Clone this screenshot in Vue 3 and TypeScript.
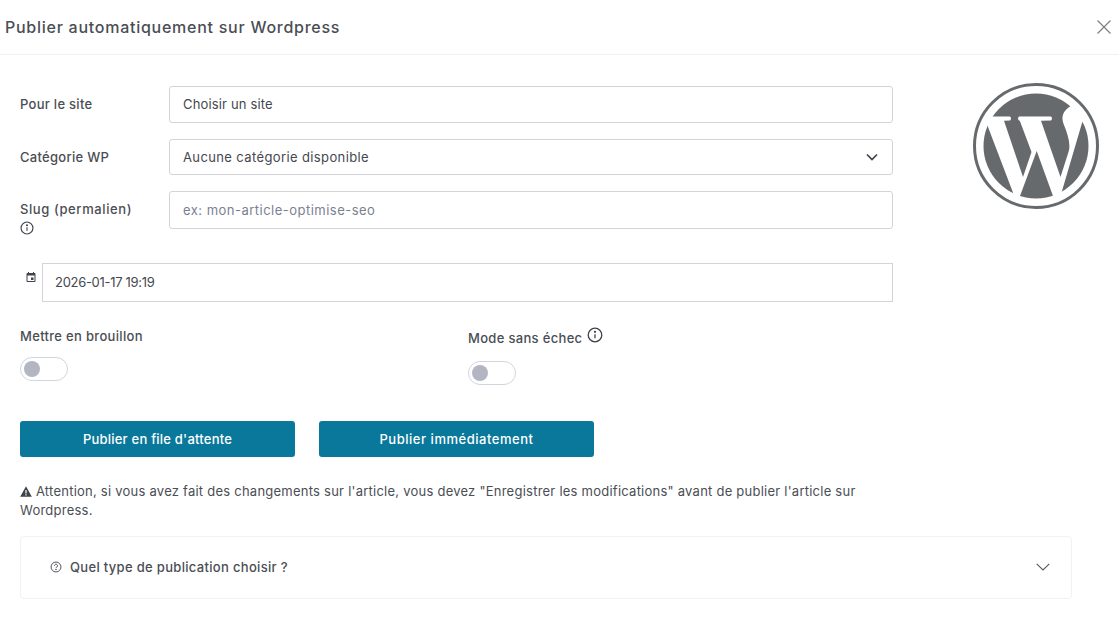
<script setup lang="ts">
const wGlyph =
  'M984 116.5L1010 116.5Q1012 118.5 1010 120.5L1004 120.7L1023 177L1031.5 152L1019.8 120.7L1019 120.5Q1017 118.5 1019 116.5L1051 116.5Q1053 118.5 1051 120.5L1041 120.7L1060.5 177L1068.5 152C1071 145 1068 135 1064 125C1061 118 1062 111 1071 106L1095 100L1082 123L1062 191L1056 205L1053 196L1036.7 151L1020 196L1016 205L1012.7 191.7Z'
</script>

<template>
  <div class="modal">
    <header class="head">
      <h1 class="title">Publier automatiquement sur Wordpress</h1>
      <svg class="close" viewBox="0 0 16 16" fill="none" stroke="#7d7f82" stroke-width="1.2"><path d="M1.5 1.5l13 13M14.5 1.5l-13 13" /></svg>
    </header>

    <div class="body">
      <div class="top">
        <div class="form">
          <div class="row r1">
            <label class="lab up">Pour le site</label>
            <div class="field h37">Choisir un site</div>
          </div>
          <div class="row r2">
            <label class="lab">Catégorie WP</label>
            <div class="field h36 select">
              <span>Aucune catégorie disponible</span>
              <svg class="chev" viewBox="0 0 12 8" fill="none" stroke="#3f444b" stroke-width="1.7"><path d="M1 1.5l5 5 5-5" /></svg>
            </div>
          </div>
          <div class="row r3">
            <label class="lab slug">
              <span class="slug-text">Slug (permalien)</span>
              <svg class="info-s" viewBox="0 0 16 16" fill="none" stroke="#3f444b" stroke-width="1.3"><circle cx="8" cy="8" r="6.8" /><path d="M8 7.2v4" /><circle cx="8" cy="4.9" r=".5" fill="#3f444b" /></svg>
            </label>
            <div class="field h38 ph">ex: mon-article-optimise-seo</div>
          </div>
          <div class="date">
            <svg class="cal" viewBox="0 0 24 24" fill="#3f444b"><path d="M19 4h-1V2h-2v2H8V2H6v2H5a2 2 0 0 0-2 2v14a2 2 0 0 0 2 2h14a2 2 0 0 0 2-2V6a2 2 0 0 0-2-2zm0 16H5V9h14v11zM12 13h5v5h-5z" /></svg>
            <div class="field h39 square">2026-01-17 19:19</div>
          </div>
          <div class="toggles">
            <div class="tg t1">
              <div class="tg-label">Mettre en brouillon</div>
              <div class="switch"><span class="knob"></span></div>
            </div>
            <div class="tg t2">
              <div class="tg-label">
                <span>Mode sans échec</span>
                <svg class="info-m" viewBox="0 0 16 16" fill="none" stroke="#3f444b" stroke-width="1.3"><circle cx="8" cy="8" r="6.8" /><path d="M8 7.2v4" /><circle cx="8" cy="4.8" r=".5" fill="#3f444b" /></svg>
              </div>
              <div class="switch"><span class="knob"></span></div>
            </div>
          </div>
        </div>
        <svg class="logo" viewBox="973 83 126 126">
          <circle cx="1036" cy="146" r="52.5" fill="#666a6d" />
          <path :d="wGlyph" fill="#fff" />
          <circle cx="1036" cy="146" r="61.5" fill="none" stroke="#666a6d" stroke-width="3" />
        </svg>
      </div>

      <div class="actions">
        <button class="btn" type="button">Publier en file d'attente</button>
        <button class="btn wide" type="button">Publier immédiatement</button>
      </div>

      <p class="warn">
        <svg class="tri" viewBox="0 0 12 11" fill="#3f444b"><path fill-rule="evenodd" d="M6 .3L11.8 10.7H.2zM5.4 4v3.6h1.2V4zM5.4 8.3v1.2h1.2V8.3z" /></svg>
        Attention, si vous avez fait des changements sur l'article, vous devez "Enregistrer les modifications" avant de publier l'article sur Wordpress.
      </p>

      <div class="accordion">
        <div class="acc-left">
          <svg class="help" viewBox="0 0 16 16" fill="none" stroke="#3f444b" stroke-width="1.2"><circle cx="8" cy="8" r="6.6" /><path d="M6 6.3a2 2 0 1 1 3.1 1.7c-.7.4-1.1.8-1.1 1.6" /><circle cx="8" cy="11.6" r=".4" fill="#3f444b" /></svg>
          <span>Quel type de publication choisir ?</span>
        </div>
        <svg class="acc-chev" viewBox="0 0 14 8" fill="none" stroke="#55595f" stroke-width="1.1"><path d="M.7 .8L7 7l6.3-6.2" /></svg>
      </div>
    </div>
  </div>
</template>

<style>
html, body { margin: 0; background: #fff; }
</style>

<style scoped>
.modal {
  width: 1119px;
  height: 622px;
  overflow: hidden;
  background: #fff;
  color: #3f444b;
  font-family: Inter, "Liberation Sans", sans-serif;
  font-size: 13px;
}
.head {
  height: 54px;
  border-bottom: 1px solid #eff0f4;
  display: flex;
  align-items: center;
  justify-content: space-between;
  padding: 0 7px 0 5px;
}
.title { margin: 0; font-size: 16px; font-weight: 450; color: #4a4e54; letter-spacing: .74px; }
.close { width: 16px; height: 16px; }
.body { padding: 0 47px 0 20px; }
.top { display: flex; align-items: flex-start; justify-content: space-between; margin-right: -27px; }
.form { width: 873px; padding-top: 31px; }
.row { display: flex; }
.r1 { align-items: center; height: 37px; margin-bottom: 16px; }
.r2 { align-items: center; height: 36px; margin-bottom: 16px; }
.r3 { height: 38px; margin-bottom: 34px; }
.lab { width: 149px; flex: none; font-weight: 450; font-size: 13px; letter-spacing: .28px; color: #4a4e54; }
.up { padding-bottom: 1px; }
.slug { display: flex; flex-direction: column; align-items: flex-start; gap: 4px; padding-top: 10px; box-sizing: border-box; line-height: 16px; }
.slug-text { letter-spacing: .6px; flex: none; }
.info-s { width: 14px; height: 14px; flex: none; }
.field {
  flex: 1;
  box-sizing: border-box;
  border: 1px solid #d2d4d9;
  border-radius: 3px;
  padding: 0 12px 0 13px;
  display: flex;
  align-items: center;
  font-size: 13px;
  letter-spacing: .3px;
  color: #44484e;
}
.h37 { height: 37px; padding-bottom: 1px; letter-spacing: .16px; }
.h36 { height: 36px; }
.h38 { height: 38px; }
.h39 { height: 39px; padding-bottom: 1px; padding-left: 12px; letter-spacing: -.3px; }
.select { justify-content: space-between; letter-spacing: .38px; }
.chev { width: 12px; height: 8px; margin-right: 2px; }
.ph { color: #7b7f92; letter-spacing: .48px; }
.square { border-radius: 0; }
.date { display: flex; align-items: flex-start; padding-left: 5px; }
.cal { width: 12px; height: 12px; margin: 8px 5px 0 0; flex: none; }
.toggles { display: flex; margin-top: 26px; height: 93px; }
.t1 { width: 448px; }
.tg-label { font-weight: 450; font-size: 13px; letter-spacing: .32px; color: #4a4e54; line-height: 16px; }
.t2 .tg-label { display: flex; align-items: flex-start; gap: 5px; height: 18px; padding-top: 2px; line-height: 16px; }
.t2 .switch { margin-top: 13px; }
.info-m { width: 16px; height: 16px; margin-top: -3px; }
.switch {
  margin-top: 13px;
  width: 48px;
  height: 24px;
  box-sizing: border-box;
  border: 1px solid #d2d5dd;
  border-radius: 12px;
  padding: 3px;
  display: flex;
}
.knob { width: 16px; height: 16px; border-radius: 50%; background: #b3b5c3; }
.actions { display: flex; gap: 24px; }
.btn {
  width: 275px;
  height: 36px;
  border: 0;
  border-radius: 3px;
  background: #09789b;
  color: #fff;
  font: 450 13px Inter, "Liberation Sans", sans-serif;
  letter-spacing: .22px;
}
.wide { letter-spacing: .53px; }
.warn { margin: 25px 0 0; width: 873px; font-size: 13px; line-height: 19px; color: #4a4e54; letter-spacing: .24px; height: 54px; }
.tri { width: 12px; height: 11px; vertical-align: -1px; }
.accordion {
  width: 1052px;
  height: 63px;
  box-sizing: border-box;
  border: 1px solid #f1f2f7;
  border-radius: 4px;
  padding: 0 21px 1px 29px;
  display: flex;
  align-items: center;
  justify-content: space-between;
}
.acc-left { display: flex; align-items: center; gap: 8px; font-weight: 450; font-size: 13px; letter-spacing: .32px; color: #4a4e54; }
.help { width: 12px; height: 12px; }
.acc-chev { width: 14px; height: 8px; }
.logo { width: 126px; height: 126px; margin-top: 28px; flex: none; }
</style>
